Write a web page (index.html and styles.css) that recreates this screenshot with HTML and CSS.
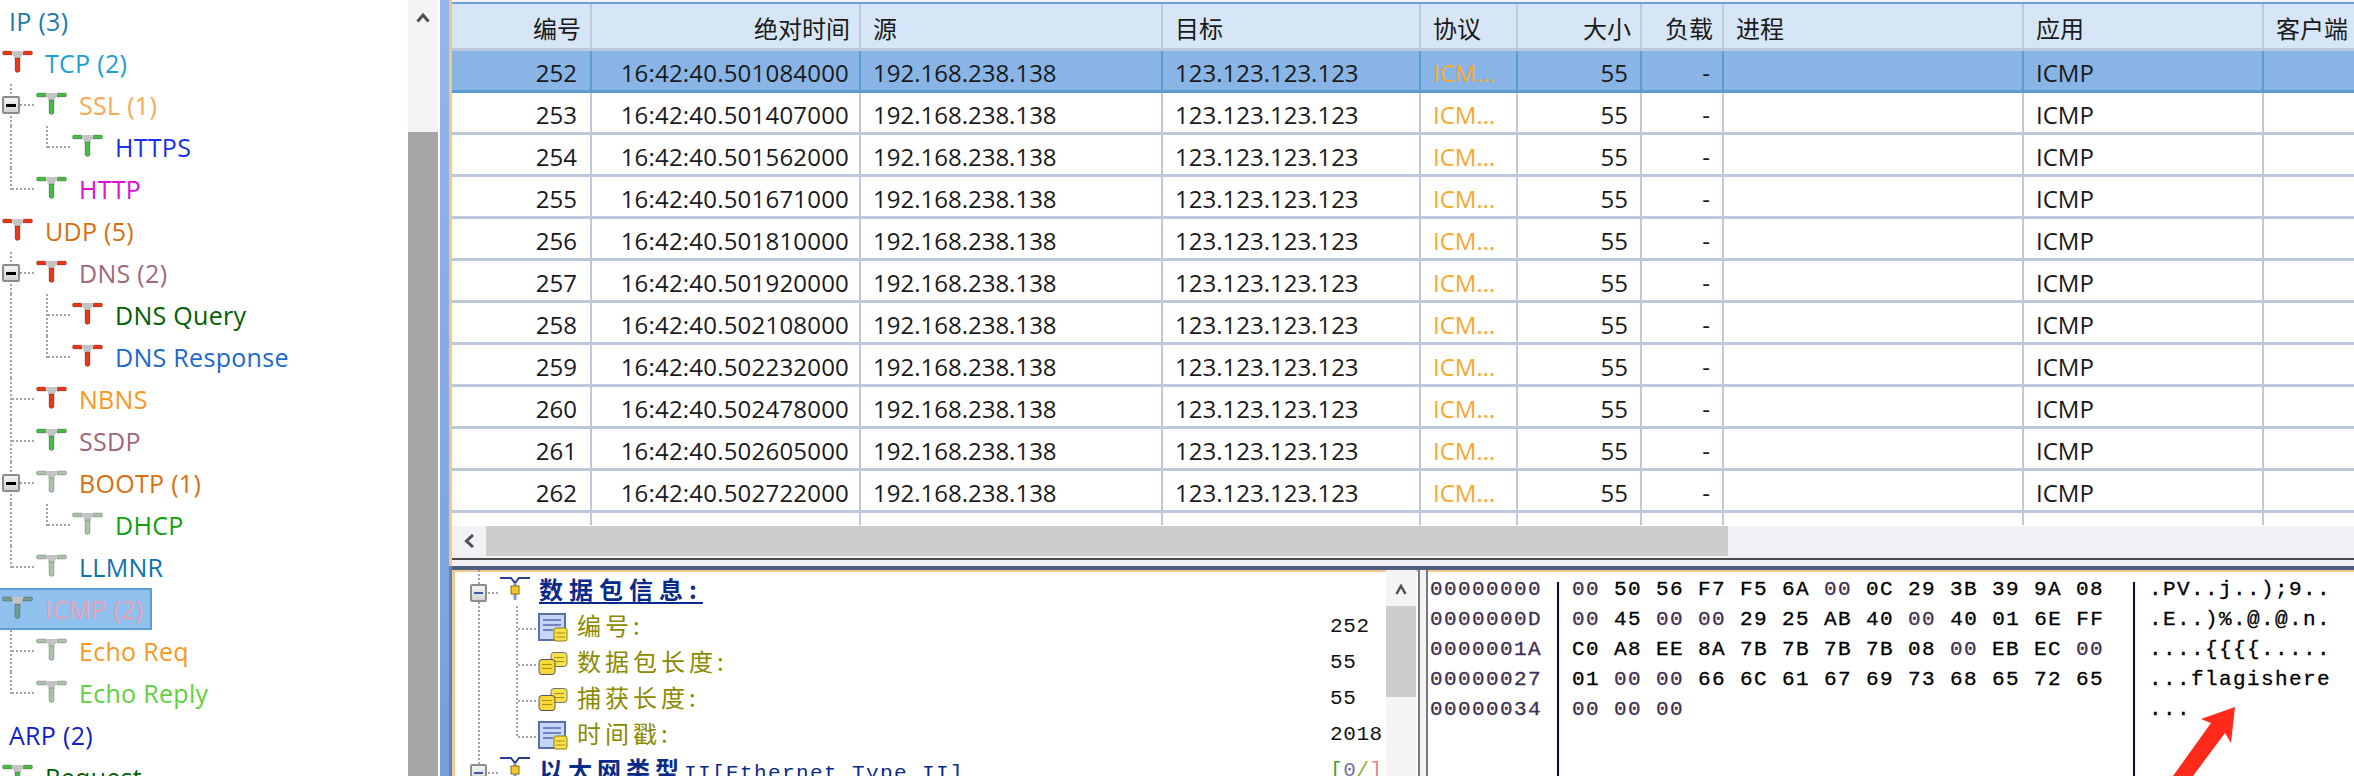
FILE: index.html
```html
<!DOCTYPE html>
<html lang="zh-CN">

<head>
  <meta charset="UTF-8">
  <title>数据包分析</title>
  <link rel="stylesheet" href="styles.css">
</head>

<body>

  <!-- shared icons -->
  <svg class="defs" width="0" height="0">
    <symbol id="tee" viewBox="0 0 31 23">
      <path d="M0.5 2.5 Q0.5 1 2 1 L10 1 L10 5 L2 5 Q0.5 5 0.5 3.5Z M30.5 2.5 Q30.5 1 29 1 L21 1 L21 5 L29 5 Q30.5 5 30.5 3.5Z" fill="currentColor" stroke="#000" stroke-opacity=".2"/>
      <path d="M9 1 L22 1 L18 9 L13 9Z" fill="#c4c4c4"/>
      <path d="M13 8 L18 8 L18 21 Q15.5 24 13 21Z" fill="currentColor" stroke="#000" stroke-opacity=".2"/>
    </symbol>
    <symbol id="lock" viewBox="0 0 30 23">
      <path d="M0 1 L11 1 L15 6 L19 1 L30 1" fill="none" stroke="#24408f" stroke-width="2"/>
      <path d="M15 6 L15 23" stroke="#7f9ad0" stroke-width="3"/>
      <rect x="11" y="9" width="8" height="8" fill="#f6c928" stroke="#8a6a10"/>
    </symbol>
    <symbol id="doc" viewBox="0 0 30 29">
      <rect x="1" y="1" width="26" height="26" fill="#c6d6f8" stroke="#5a70a8" stroke-width="2"/>
      <path d="M5 7 H23 M5 12 H23 M5 17 H15" stroke="#6f86bd" stroke-width="2"/>
      <rect x="16" y="15" width="13" height="13" rx="2" fill="#f8e04a" stroke="#8f7a10"/>
      <path d="M18 20 H27 M18 24 H27" stroke="#a98f10"/>
    </symbol>
    <symbol id="db" viewBox="0 0 30 24">
      <rect x="13" y="1" width="16" height="14" rx="3" fill="#f8e04a" stroke="#777"/>
      <path d="M16 6 H26 M16 10 H26" stroke="#a98f10"/>
      <rect x="1" y="8" width="16" height="15" rx="3" fill="#f8d838" stroke="#555"/>
      <path d="M4 13 H14 M4 17 H14" stroke="#a98f10"/>
    </symbol>
  </svg>

  <div class="app">

    <!-- Protocol tree -->
    <div class="side">
      <div class="tree">
        <div class="row"><span class="plain c-ip">IP (3)</span></div>
        <div class="row"><svg class="tee red"><use href="#tee"/></svg><span class="label c-tcp">TCP (2)</span></div>
        <div class="row"><span class="g g-box"><i class="minus"></i></span><svg class="tee green"><use href="#tee"/></svg><span class="label c-ssl">SSL (1)</span></div>
        <div class="row"><span class="g g-v"></span><span class="g g-l"></span><svg class="tee green"><use href="#tee"/></svg><span class="label c-https">HTTPS</span></div>
        <div class="row"><span class="g g-l"></span><svg class="tee green"><use href="#tee"/></svg><span class="label c-http">HTTP</span></div>
        <div class="row"><svg class="tee red"><use href="#tee"/></svg><span class="label c-udp">UDP (5)</span></div>
        <div class="row"><span class="g g-box"><i class="minus"></i></span><svg class="tee red"><use href="#tee"/></svg><span class="label c-dns">DNS (2)</span></div>
        <div class="row"><span class="g g-v"></span><span class="g g-t"></span><svg class="tee red"><use href="#tee"/></svg><span class="label c-query">DNS Query</span></div>
        <div class="row"><span class="g g-v"></span><span class="g g-l"></span><svg class="tee red"><use href="#tee"/></svg><span class="label c-resp">DNS Response</span></div>
        <div class="row"><span class="g g-t"></span><svg class="tee red"><use href="#tee"/></svg><span class="label c-nbns">NBNS</span></div>
        <div class="row"><span class="g g-t"></span><svg class="tee green"><use href="#tee"/></svg><span class="label c-dns">SSDP</span></div>
        <div class="row"><span class="g g-box"><i class="minus"></i></span><svg class="tee gray"><use href="#tee"/></svg><span class="label c-udp">BOOTP (1)</span></div>
        <div class="row"><span class="g g-v"></span><span class="g g-l"></span><svg class="tee gray"><use href="#tee"/></svg><span class="label c-dhcp">DHCP</span></div>
        <div class="row"><span class="g g-l"></span><svg class="tee gray"><use href="#tee"/></svg><span class="label c-llmnr">LLMNR</span></div>
        <div class="row selected"><svg class="tee dim"><use href="#tee"/></svg><span class="label c-icmp">ICMP (2)</span></div>
        <div class="row"><span class="g g-t"></span><svg class="tee gray"><use href="#tee"/></svg><span class="label c-nbns">Echo Req</span></div>
        <div class="row"><span class="g g-l"></span><svg class="tee gray"><use href="#tee"/></svg><span class="label c-reply">Echo Reply</span></div>
        <div class="row"><span class="plain c-arp">ARP (2)</span></div>
        <div class="row"><svg class="tee green"><use href="#tee"/></svg><span class="label c-query">Request</span></div>
      </div>
      <div class="vbar">
        <div class="arrow-btn"><svg width="14" height="11" viewBox="0 0 14 11"><path d="M1.5 9.5 L7 3 L12.5 9.5" fill="none" stroke="#505050" stroke-width="3"/></svg></div>
        <div class="vthumb"></div>
      </div>
    </div>
    <div class="splitter"></div>

    <div class="main">

      <!-- Packet list -->
      <div class="list">
        <table class="packets">
          <colgroup>
            <col class="w-no"><col class="w-time"><col class="w-src"><col class="w-dst"><col class="w-proto"><col class="w-size"><col class="w-load"><col class="w-proc"><col class="w-app"><col class="w-client">
          </colgroup>
          <thead>
            <tr><th class="r">编号</th><th class="r">绝对时间</th><th>源</th><th>目标</th><th>协议</th><th class="r">大小</th><th class="r">负载</th><th>进程</th><th>应用</th><th>客户端</th></tr>
          </thead>
          <tbody>
            <tr class="active"><td class="r">252</td><td class="r">16:42:40.501084000</td><td>192.168.238.138</td><td>123.123.123.123</td><td class="proto">ICM...</td><td class="r">55</td><td class="r">-</td><td></td><td>ICMP</td><td></td></tr>
            <tr><td class="r">253</td><td class="r">16:42:40.501407000</td><td>192.168.238.138</td><td>123.123.123.123</td><td class="proto">ICM...</td><td class="r">55</td><td class="r">-</td><td></td><td>ICMP</td><td></td></tr>
            <tr><td class="r">254</td><td class="r">16:42:40.501562000</td><td>192.168.238.138</td><td>123.123.123.123</td><td class="proto">ICM...</td><td class="r">55</td><td class="r">-</td><td></td><td>ICMP</td><td></td></tr>
            <tr><td class="r">255</td><td class="r">16:42:40.501671000</td><td>192.168.238.138</td><td>123.123.123.123</td><td class="proto">ICM...</td><td class="r">55</td><td class="r">-</td><td></td><td>ICMP</td><td></td></tr>
            <tr><td class="r">256</td><td class="r">16:42:40.501810000</td><td>192.168.238.138</td><td>123.123.123.123</td><td class="proto">ICM...</td><td class="r">55</td><td class="r">-</td><td></td><td>ICMP</td><td></td></tr>
            <tr><td class="r">257</td><td class="r">16:42:40.501920000</td><td>192.168.238.138</td><td>123.123.123.123</td><td class="proto">ICM...</td><td class="r">55</td><td class="r">-</td><td></td><td>ICMP</td><td></td></tr>
            <tr><td class="r">258</td><td class="r">16:42:40.502108000</td><td>192.168.238.138</td><td>123.123.123.123</td><td class="proto">ICM...</td><td class="r">55</td><td class="r">-</td><td></td><td>ICMP</td><td></td></tr>
            <tr><td class="r">259</td><td class="r">16:42:40.502232000</td><td>192.168.238.138</td><td>123.123.123.123</td><td class="proto">ICM...</td><td class="r">55</td><td class="r">-</td><td></td><td>ICMP</td><td></td></tr>
            <tr><td class="r">260</td><td class="r">16:42:40.502478000</td><td>192.168.238.138</td><td>123.123.123.123</td><td class="proto">ICM...</td><td class="r">55</td><td class="r">-</td><td></td><td>ICMP</td><td></td></tr>
            <tr><td class="r">261</td><td class="r">16:42:40.502605000</td><td>192.168.238.138</td><td>123.123.123.123</td><td class="proto">ICM...</td><td class="r">55</td><td class="r">-</td><td></td><td>ICMP</td><td></td></tr>
            <tr><td class="r">262</td><td class="r">16:42:40.502722000</td><td>192.168.238.138</td><td>123.123.123.123</td><td class="proto">ICM...</td><td class="r">55</td><td class="r">-</td><td></td><td>ICMP</td><td></td></tr>
            <tr class="stub"><td></td><td></td><td></td><td></td><td></td><td></td><td></td><td></td><td></td><td></td></tr>
          </tbody>
        </table>
      </div>
      <div class="hbar">
        <div class="hbtn"><svg width="13" height="14" viewBox="0 0 13 14"><path d="M10 1 L3.5 7 L10 13" fill="none" stroke="#505050" stroke-width="3"/></svg></div>
        <div class="hthumb"></div>
      </div>
      <div class="divider"></div>

      <!-- Packet detail and hex dump -->
      <div class="detail">
        <div class="info">
          <div class="info-tree">
            <div class="irow"><span class="ig ig-box"><i class="minus small"></i></span><svg class="ico-t"><use href="#lock"/></svg><span class="head under">数据包信息:</span></div>
            <div class="irow"><span class="ig ig-v"></span><span class="ih ih-t"></span><svg class="ico"><use href="#doc"/></svg><span class="item">编号:</span><span class="val">252</span></div>
            <div class="irow"><span class="ig ig-v"></span><span class="ih ih-t"></span><svg class="ico"><use href="#db"/></svg><span class="item">数据包长度:</span><span class="val">55</span></div>
            <div class="irow"><span class="ig ig-v"></span><span class="ih ih-t"></span><svg class="ico"><use href="#db"/></svg><span class="item">捕获长度:</span><span class="val">55</span></div>
            <div class="irow"><span class="ig ig-v"></span><span class="ih ih-l"></span><svg class="ico"><use href="#doc"/></svg><span class="item">时间戳:</span><span class="val">2018</span></div>
            <div class="irow"><span class="ig ig-box"><i class="minus small"></i></span><svg class="ico-t"><use href="#lock"/></svg><span class="head">以太网类型<span class="latin">II[Ethernet Type II]</span></span><span class="val"><span class="b1">[</span><span class="b2">0</span><span class="b3">/</span><span class="b4">]</span></span></div>
          </div>
          <div class="vbar small-bar">
            <div class="arrow-btn"><svg width="12" height="11" viewBox="0 0 12 11"><path d="M1.5 10 L6 2 L10.5 10" fill="none" stroke="#505050" stroke-width="2.5"/></svg></div>
            <div class="vthumb"></div>
          </div>
        </div>
        <div class="sash"></div>
        <div class="hex">
          <pre class="col offsets">00000000
0000000D
0000001A
00000027
00000034</pre>
          <pre class="col bytes"><span class="z">00</span> 50 56 F7 F5 6A <span class="z">00</span> 0C 29 3B 39 9A 08
<span class="z">00</span> 45 <span class="z">00</span> <span class="z">00</span> 29 25 AB 40 <span class="z">00</span> 40 01 6E FF
C0 A8 EE 8A 7B 7B 7B 7B 08 <span class="z">00</span> EB EC <span class="z">00</span>
01 <span class="z">00</span> <span class="z">00</span> 66 6C 61 67 69 73 68 65 72 65
<span class="z">00</span> <span class="z">00</span> <span class="z">00</span></pre>
          <pre class="col ascii">.PV..j..);9..
.E..)%.@.@.n.
....{{{{.....
...flagishere
...</pre>
        </div>
      </div>
    </div>
  </div>

  <!-- red annotation arrow drawn over the hex dump -->
  <svg class="note" width="70" height="76" viewBox="0 0 70 76">
    <path d="M65 0 L31 12 L41 16 L3 69 L23 69 L55 26 L61 36Z M3 69 L-2 76 L18 76 L23 69Z" fill="#ff2a1a"/>
  </svg>

</body>

</html>
```
FILE: styles.css
```css
:root {
  --dotv: repeating-linear-gradient(to bottom, #a4a4a4 0 2px, transparent 2px 4px);
  --doth: repeating-linear-gradient(to right, #a4a4a4 0 2px, transparent 2px 4px);
}

body {
  margin: 0;
  background: #fff;
  overflow: hidden;
  font-family: "Open Sans", "Noto Sans CJK SC", sans-serif;
  position: relative;
}

.defs {
  display: block;
  height: 0;
}

.app {
  display: flex;
  width: 2354px;
  height: 776px;
  overflow: hidden;
}

/* left tree */
.side {
  display: flex;
  flex: none;
  width: 440px;
}

.tree {
  width: 408px;
  flex: none;
  overflow: hidden;
}

.row {
  display: flex;
  align-items: center;
  height: 42px;
  font-size: 25px;
  letter-spacing: .3px;
  white-space: nowrap;
}

.row > .tee:first-child {
  margin-left: 2px;
}

.plain {
  padding-left: 9px;
}

.label {
  margin-left: 12px;
}

.selected {
  width: 152px;
  box-sizing: border-box;
  background: #90c0ee;
  border: 2px solid #5c9fd8;
  border-left: 0;
}

.tee {
  flex: none;
  width: 31px;
  height: 23px;
  margin-top: -4px;
}

.red { color: #e8381a; }
.green { color: #4cb848; }
.gray { color: #a9c4a9; }
.dim { color: #6f9c8f; }

.c-ip { color: #1a7ab0; }
.c-tcp { color: #1ca0d8; }
.c-ssl { color: #f8a850; }
.c-https { color: #1a30e8; }
.c-http { color: #d810d8; }
.c-udp { color: #d87010; }
.c-dns { color: #a06878; }
.c-query { color: #006000; }
.c-resp { color: #1a68d0; }
.c-nbns { color: #f89820; }
.c-dhcp { color: #10a010; }
.c-llmnr { color: #1070b0; }
.c-icmp { color: #e8a0b4; }
.c-reply { color: #60d040; }
.c-arp { color: #1020c8; }

/* tree guide lines */
.g {
  flex: none;
  display: flex;
  align-items: center;
  width: 36px;
  height: 42px;
  background-repeat: no-repeat;
}

.g-v {
  background-image: var(--dotv);
  background-position: 10px 0;
  background-size: 2px 100%;
}

.g-t {
  background-image: var(--dotv), var(--doth);
  background-position: 10px 0, 12px 20px;
  background-size: 2px 100%, 24px 2px;
}

.g-l {
  background-image: var(--dotv), var(--doth);
  background-position: 10px 0, 12px 20px;
  background-size: 2px 22px, 24px 2px;
}

.g-box {
  background-image: var(--dotv), var(--doth);
  background-position: 10px 0, 20px 20px;
  background-size: 2px 100%, 16px 2px;
}

.minus {
  display: block;
  box-sizing: border-box;
  width: 18px;
  height: 18px;
  margin-left: 2px;
  border: 2px solid #8c8c8c;
  border-radius: 2px;
  background: linear-gradient(#000, #000) center / 10px 3px no-repeat, linear-gradient(#f4f4f4, #d4d4d4);
}

.minus.small {
  width: 17px;
  margin: 9px 0 0 15px;
  background: linear-gradient(#3c5a9c, #3c5a9c) center / 9px 2px no-repeat, linear-gradient(#f4f4f4, #d4d4d4);
}

.vbar {
  width: 30px;
  flex: none;
  background: #f5f3f6;
  display: flex;
  flex-direction: column;
}

.arrow-btn {
  height: 132px;
  display: flex;
  justify-content: center;
  padding-top: 12px;
  box-sizing: border-box;
}

.vthumb {
  flex: 1;
  background: #a6a6a6;
}

.side .vbar {
  margin-right: 2px;
}

/* orange edge runs down to the detail pane, which has its own */
.splitter {
  flex: none;
  width: 12px;
  background:
    linear-gradient(#f3c58a, #f3c58a) right top / 3px 566px no-repeat,
    linear-gradient(#5f82bc, #5f82bc) right bottom / 3px 210px no-repeat,
    linear-gradient(#93b7ea, #769fda);
}

/* right side */
.main {
  flex: 1;
  min-width: 0;
  display: flex;
  flex-direction: column;
  background: #f3f1f6;
}

.list {
  overflow: hidden;
  background: #fff;
  border-top: 2px solid #6a9fe0;
  box-sizing: border-box;
  margin-top: 2px;
  height: 524px;
}

.packets {
  border-collapse: separate;
  border-spacing: 0;
  table-layout: fixed;
  width: 1921px;
  font-size: 24px;
  color: #1a1a1a;
}

.w-no { width: 140px; }
.w-time { width: 269px; }
.w-src { width: 302px; }
.w-dst { width: 258px; }
.w-proto { width: 97px; }
.w-size { width: 124px; }
.w-load { width: 82px; }
.w-proc { width: 300px; }
.w-app { width: 240px; }
.w-client { width: 109px; }

th, td {
  box-sizing: border-box;
  padding: 0 10px 0 12px;
  border-right: 2px solid #bcc8dc;
  border-bottom: 3px solid #bcc8dc;
  text-align: left;
  white-space: nowrap;
  overflow: hidden;
}

th {
  height: 47px;
  padding-top: 2px;
  font-weight: 400;
  font-size: 24px;
  background: #d6e6f6;
}

td {
  height: 42px;
  padding-top: 4px;
}

td.r {
  text-align: right;
  padding-right: 12px;
}

th.r {
  text-align: right;
  padding-right: 9px;
}

td:first-child {
  padding-right: 13px;
}

td:nth-child(2) {
  padding-right: 10px;
  letter-spacing: .2px;
}

.proto {
  color: #f8a830;
}

.active td {
  background: #88b4e6;
  border-color: #5a9bd5;
}

.stub td {
  height: 12px;
  padding-top: 0;
  border-bottom: 0;
}

.hbar {
  flex: none;
  display: flex;
  height: 30px;
}

.hbtn {
  width: 34px;
  flex: none;
  display: flex;
  align-items: center;
  justify-content: center;
}

.hthumb {
  width: 1242px;
  background: #cdcdcd;
}

.divider {
  flex: none;
  height: 2px;
  margin-top: 2px;
  background: #4a4a4a;
}

.detail {
  flex: 1;
  min-height: 0;
  display: flex;
  margin-top: 6px;
  border-top: 4px solid #4f5f7f;
  background: #fff;
  box-shadow: inset 3px 2px 0 #f5c890;
}

.info {
  display: flex;
  width: 964px;
  flex: none;
  padding-left: 3px;
  box-sizing: border-box;
}

.info-tree {
  flex: 1;
  min-width: 0;
  overflow: hidden;
}

.irow {
  display: flex;
  align-items: center;
  height: 36px;
  white-space: nowrap;
  font-family: "Noto Sans CJK SC", sans-serif;
  font-size: 24px;
  letter-spacing: 4px;
}

.ig, .ih {
  flex: none;
  height: 36px;
  display: flex;
  align-items: center;
  background-repeat: no-repeat;
}

.ig {
  width: 45px;
}

.ig-v {
  background-image: var(--dotv);
  background-position: 23px 0;
  background-size: 2px 100%;
}

.ig-box {
  background-image: var(--dotv), var(--doth);
  background-position: 23px 0, 33px 22px;
  background-size: 2px 100%, 12px 2px;
}

.ih {
  width: 38px;
}

.ih-t {
  background-image: var(--dotv), var(--doth);
  background-position: 16px 0, 18px 22px;
  background-size: 2px 100%, 20px 2px;
}

.ih-l {
  background-image: var(--dotv), var(--doth);
  background-position: 16px 0, 18px 22px;
  background-size: 2px 24px, 20px 2px;
}

.ico-t {
  flex: none;
  width: 30px;
  height: 23px;
  margin-right: 9px;
}

.ico {
  flex: none;
  width: 30px;
  height: 29px;
  margin: 6px 9px 0 0;
}

.head {
  color: #0a2a8a;
  font-weight: 700;
  letter-spacing: 5px;
  flex: 1;
  min-width: 0;
}

.under {
  flex: none;
  letter-spacing: 6px;
  text-decoration: underline;
  text-underline-offset: 3px;
}

.latin {
  font-family: "Liberation Mono", monospace;
  font-size: 21px;
  letter-spacing: 1.4px;
  font-weight: 400;
}

.item {
  flex: 1;
  min-width: 0;
  color: #8a8a00;
}

.val {
  flex: none;
  width: 56px;
  margin-top: 4px;
  overflow: hidden;
  font-family: "Liberation Mono", monospace;
  font-size: 21px;
  letter-spacing: .6px;
  color: #111;
}

.b1 { color: #3aa040; }
.b2 { color: #7070a8; }
.b3 { color: #90b020; }
.b4 { color: #e88080; }

.small-bar .arrow-btn {
  height: 36px;
  padding-top: 14px;
}

.small-bar .vthumb {
  flex: none;
  height: 91px;
  background: #cdcdcd;
}

.sash {
  flex: none;
  width: 6px;
  margin-left: 2px;
  background: #f5f3f6;
  border-left: 2px solid #7a7a7a;
  border-right: 2px solid #7a7a7a;
}

.hex {
  flex: 1;
  display: flex;
  min-width: 0;
  overflow: hidden;
}

.col {
  margin: 0;
  padding-top: 5px;
  font-family: "Liberation Mono", monospace;
  font-size: 21px;
  line-height: 30px;
  letter-spacing: 1.4px;
  color: #000;
  -webkit-text-stroke: .3px;
}

.offsets {
  width: 129px;
  flex: none;
  padding-left: 2px;
  box-sizing: border-box;
  color: #3f2f52;
}

.bytes, .ascii {
  background: linear-gradient(#00007f, #00007f) 0 12px / 2px 100% no-repeat;
}

.bytes {
  width: 576px;
  flex: none;
  padding-left: 15px;
  box-sizing: border-box;
}

.ascii {
  flex: 1;
  padding-left: 16px;
}

.z {
  color: #3f2f52;
}

.note {
  position: absolute;
  left: 2170px;
  top: 707px;
  overflow: visible;
}
```
